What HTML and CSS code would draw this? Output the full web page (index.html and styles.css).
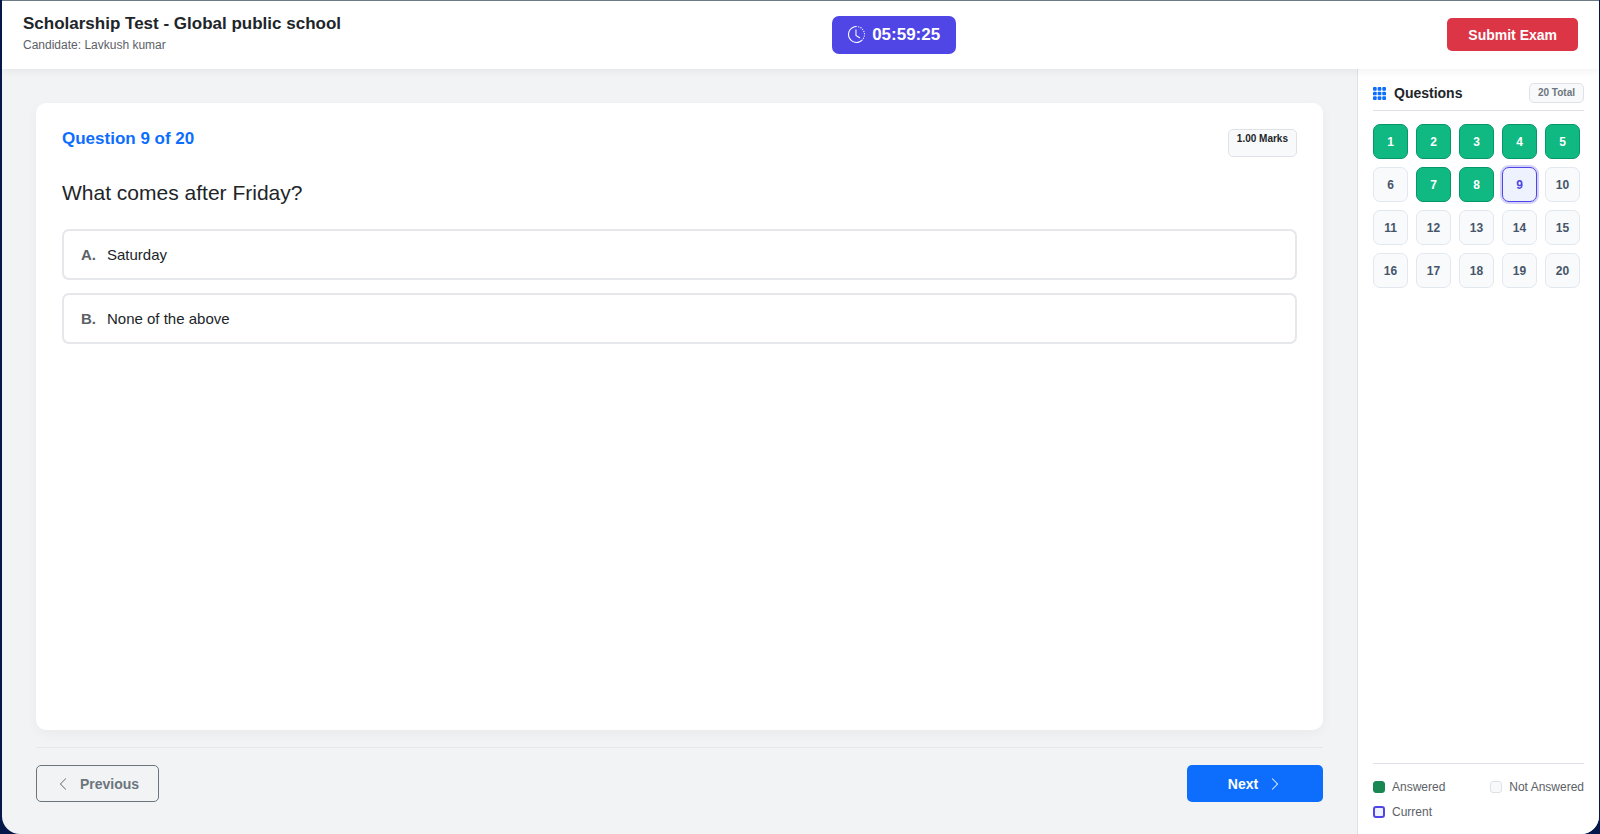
FILE: index.html
```
<!DOCTYPE html>
<html lang="en">

<head>
    <meta charset="UTF-8">
    <title>Scholarship Test</title>
    <link rel="stylesheet" href="styles.css">
</head>

<body>
    <div class="exam-window">
        <header class="exam-header">
            <div>
                <h1 class="exam-title">Scholarship Test - Global public school</h1>
                <p class="candidate">Candidate: Lavkush kumar</p>
            </div>
            <div class="timer">
                <svg width="17" height="17" viewBox="0 0 16 16" fill="currentColor">
                    <path d="M8.515 1.019A7 7 0 0 0 8 1V0a8 8 0 0 1 .589.022zm2.004.45a7 7 0 0 0-.985-.299l.219-.976q.576.129 1.126.342zm1.37.71a7 7 0 0 0-.439-.27l.493-.87a8 8 0 0 1 .979.654l-.615.789a7 7 0 0 0-.418-.302zm1.834 1.79a7 7 0 0 0-.653-.796l.724-.69q.406.429.747.91zm.744 1.352a7 7 0 0 0-.214-.468l.893-.45a8 8 0 0 1 .45 1.088l-.95.313a7 7 0 0 0-.179-.483m.53 2.507a7 7 0 0 0-.1-1.025l.985-.17q.1.58.116 1.17zm-.131 1.538q.05-.254.081-.51l.993.123a8 8 0 0 1-.23 1.155l-.964-.267q.069-.247.12-.501m-.952 2.379q.276-.436.486-.908l.914.405q-.24.54-.555 1.038zm-.964 1.205q.183-.183.35-.378l.758.653a8 8 0 0 1-.401.432z" />
                    <path d="M8 1a7 7 0 1 0 4.95 11.95l.707.707A8.001 8.001 0 1 1 8 0z" />
                    <path d="M7.5 3a.5.5 0 0 1 .5.5v5.21l3.248 1.856a.5.5 0 0 1-.496.868l-3.5-2A.5.5 0 0 1 7 9V3.5a.5.5 0 0 1 .5-.5" />
                </svg>
                <span>05:59:25</span>
            </div>
            <button type="button" class="btn btn-submit">Submit Exam</button>
        </header>

        <div class="exam-body">
            <main class="exam-main">
                <section class="question-card">
                    <div class="question-head">
                        <h2 class="question-number">Question 9 of 20</h2>
                        <span class="badge badge-marks">1.00 Marks</span>
                    </div>
                    <p class="question-text" id="question">What comes after Friday?</p>
                    <div class="options" role="radiogroup" aria-labelledby="question">
                        <label class="option">
                            <input type="radio" name="answer" value="A">
                            <span class="option-letter">A.</span>
                            <span>Saturday</span>
                        </label>
                        <label class="option">
                            <input type="radio" name="answer" value="B">
                            <span class="option-letter">B.</span>
                            <span>None of the above</span>
                        </label>
                    </div>
                </section>
                <div class="exam-nav">
                    <button type="button" class="btn btn-prev">
                        <svg width="14" height="14" viewBox="0 0 16 16" fill="currentColor">
                            <path d="M11.354 1.646a.5.5 0 0 1 0 .708L5.707 8l5.647 5.646a.5.5 0 0 1-.708.708l-6-6a.5.5 0 0 1 0-.708l6-6a.5.5 0 0 1 .708 0" />
                        </svg>
                        Previous
                    </button>
                    <button type="button" class="btn btn-next">
                        Next
                        <svg width="14" height="14" viewBox="0 0 16 16" fill="currentColor">
                            <path d="M4.646 1.646a.5.5 0 0 1 .708 0l6 6a.5.5 0 0 1 0 .708l-6 6a.5.5 0 0 1-.708-.708L10.293 8 4.646 2.354a.5.5 0 0 1 0-.708" />
                        </svg>
                    </button>
                </div>
            </main>

            <aside class="palette">
                <div class="palette-head">
                    <h2 class="palette-title">
                        <svg width="13" height="13" viewBox="0 0 14 14" fill="#0d6efd">
                            <rect x="0" y="0" width="4" height="4" rx="1" />
                            <rect x="5" y="0" width="4" height="4" rx="1" />
                            <rect x="10" y="0" width="4" height="4" rx="1" />
                            <rect x="0" y="5" width="4" height="4" rx="1" />
                            <rect x="5" y="5" width="4" height="4" rx="1" />
                            <rect x="10" y="5" width="4" height="4" rx="1" />
                            <rect x="0" y="10" width="4" height="4" rx="1" />
                            <rect x="5" y="10" width="4" height="4" rx="1" />
                            <rect x="10" y="10" width="4" height="4" rx="1" />
                        </svg>
                        Questions
                    </h2>
                    <span class="badge badge-total">20 Total</span>
                </div>
                <div class="palette-grid">
                    <button type="button" class="q-btn answered">1</button>
                    <button type="button" class="q-btn answered">2</button>
                    <button type="button" class="q-btn answered">3</button>
                    <button type="button" class="q-btn answered">4</button>
                    <button type="button" class="q-btn answered">5</button>
                    <button type="button" class="q-btn">6</button>
                    <button type="button" class="q-btn answered">7</button>
                    <button type="button" class="q-btn answered">8</button>
                    <button type="button" class="q-btn current">9</button>
                    <button type="button" class="q-btn">10</button>
                    <button type="button" class="q-btn">11</button>
                    <button type="button" class="q-btn">12</button>
                    <button type="button" class="q-btn">13</button>
                    <button type="button" class="q-btn">14</button>
                    <button type="button" class="q-btn">15</button>
                    <button type="button" class="q-btn">16</button>
                    <button type="button" class="q-btn">17</button>
                    <button type="button" class="q-btn">18</button>
                    <button type="button" class="q-btn">19</button>
                    <button type="button" class="q-btn">20</button>
                </div>
                <div class="legend">
                    <span class="legend-item"><i class="swatch swatch-answered"></i>Answered</span>
                    <span class="legend-item"><i class="swatch"></i>Not Answered</span>
                    <span class="legend-item"><i class="swatch swatch-current"></i>Current</span>
                </div>
            </aside>
        </div>
    </div>
</body>

</html>
```
FILE: styles.css
```
* {
    box-sizing: border-box;
}

body {
    margin: 0;
    padding: 0 1px 0 2px;
    background: #06184a;
    color: #212529;
    font-family: "Liberation Sans", Arial, sans-serif;
    font-size: 15px;
    line-height: 20px;
}

h1,
h2,
p {
    margin: 0;
}

.exam-window {
    display: flex;
    flex-direction: column;
    min-height: 100vh;
    overflow: hidden;
    border-top: 1px solid #6c7a86;
    border-radius: 0 0 18px 18px;
    background: #f1f3f5;
}

/* Header */
.exam-header {
    position: relative;
    display: flex;
    align-items: center;
    justify-content: space-between;
    height: 68px;
    padding: 0 21px 1px;
    background: #fff;
    box-shadow: 0 2px 8px rgba(0, 0, 0, 0.06);
}

.exam-title {
    font-size: 17px;
    line-height: 22px;
}

.candidate {
    margin-bottom: 1px;
    color: #5c6167;
    font-size: 12px;
}

.timer {
    display: flex;
    align-items: center;
    gap: 7px;
    height: 38px;
    padding: 0 16px;
    border-radius: 7px;
    background: #4f46e5;
    color: #fff;
    font-size: 17px;
    font-weight: bold;
}

.btn {
    display: flex;
    align-items: center;
    justify-content: center;
    gap: 10px;
    height: 37px;
    border: 1px solid transparent;
    border-radius: 5px;
    font: bold 14px "Liberation Sans", Arial, sans-serif;
    cursor: pointer;
}

.btn-submit {
    height: 33px;
    padding: 0 20px;
    background: #dc3545;
    color: #fff;
}

/* Question area */
.exam-body {
    display: flex;
    flex: 1;
}

.exam-main {
    display: flex;
    flex: 1;
    flex-direction: column;
    padding: 34px 34px 32px;
}

.question-card {
    flex: 1;
    margin-bottom: 17px;
    padding: 26px;
    border-radius: 10px;
    background: #fff;
    box-shadow: 0 4px 12px rgba(0, 0, 0, 0.04);
}

.question-head {
    display: flex;
    justify-content: space-between;
    height: 28px;
    margin-bottom: 22px;
}

.question-number {
    color: #0d6efd;
    font-size: 17px;
    line-height: 20px;
}

.badge {
    padding: 0 8px;
    border: 1px solid #dee2e6;
    border-radius: 5px;
    background: #f8f9fa;
    font-size: 10px;
    font-weight: bold;
    line-height: 18px;
}

.question-text {
    margin-bottom: 22px;
    font-size: 21px;
    line-height: 28px;
}

.options {
    display: grid;
    gap: 13px;
}

.option {
    display: flex;
    align-items: center;
    height: 51px;
    padding: 0 17px;
    border: 2px solid #e5e7eb;
    border-radius: 7px;
    cursor: pointer;
}

.option input {
    position: absolute;
    opacity: 0;
}

.option-letter {
    width: 26px;
    color: #5c6167;
    font-weight: bold;
}

.exam-nav {
    display: flex;
    justify-content: space-between;
    padding-top: 17px;
    border-top: 1px solid #e5e7ea;
}

.btn-prev {
    width: 123px;
    border-color: #6c757d;
    background: transparent;
    color: #6c757d;
}

.btn-next {
    width: 136px;
    background: #0d6efd;
    color: #fff;
}

/* Question palette */
.palette {
    display: flex;
    flex-direction: column;
    width: 242px;
    padding: 14px 15px 12px;
    border-left: 1px solid #dee2e6;
    background: #fff;
}

.palette-head {
    display: flex;
    align-items: center;
    justify-content: space-between;
    padding-bottom: 7px;
    border-bottom: 1px solid #dee2e6;
}

.palette-title {
    display: flex;
    align-items: center;
    gap: 8px;
    font-size: 14px;
}

.badge-total {
    color: #6c757d;
}

.palette-grid {
    display: grid;
    grid-template-columns: repeat(5, 35px);
    gap: 8px;
    margin-top: 13px;
}

.q-btn {
    height: 35px;
    padding: 0;
    border: 1px solid #e2e8f0;
    border-radius: 7px;
    background: #f8fafc;
    color: #475569;
    font: bold 12px "Liberation Sans", Arial, sans-serif;
    cursor: pointer;
}

.q-btn.answered {
    border-color: #059669;
    background: #10b981;
    color: #fff;
}

.q-btn.current {
    border-color: #4f46e5;
    background: #eef2ff;
    color: #4f46e5;
    box-shadow: 0 0 0 2px rgba(79, 70, 229, 0.25);
}

.legend {
    display: flex;
    flex-wrap: wrap;
    justify-content: space-between;
    gap: 5px;
    margin-top: auto;
    padding-top: 13px;
    border-top: 1px solid #dee2e6;
    color: #5c6167;
    font-size: 12px;
}

.legend-item {
    display: flex;
    align-items: center;
    gap: 7px;
}

.swatch {
    width: 12px;
    height: 12px;
    border: 1px solid #dee2e6;
    border-radius: 3px;
    background: #f8f9fa;
}

.swatch-answered {
    border-color: #198754;
    background: #198754;
}

.swatch-current {
    border: 2px solid #4f46e5;
    background: #eef2ff;
}
```
